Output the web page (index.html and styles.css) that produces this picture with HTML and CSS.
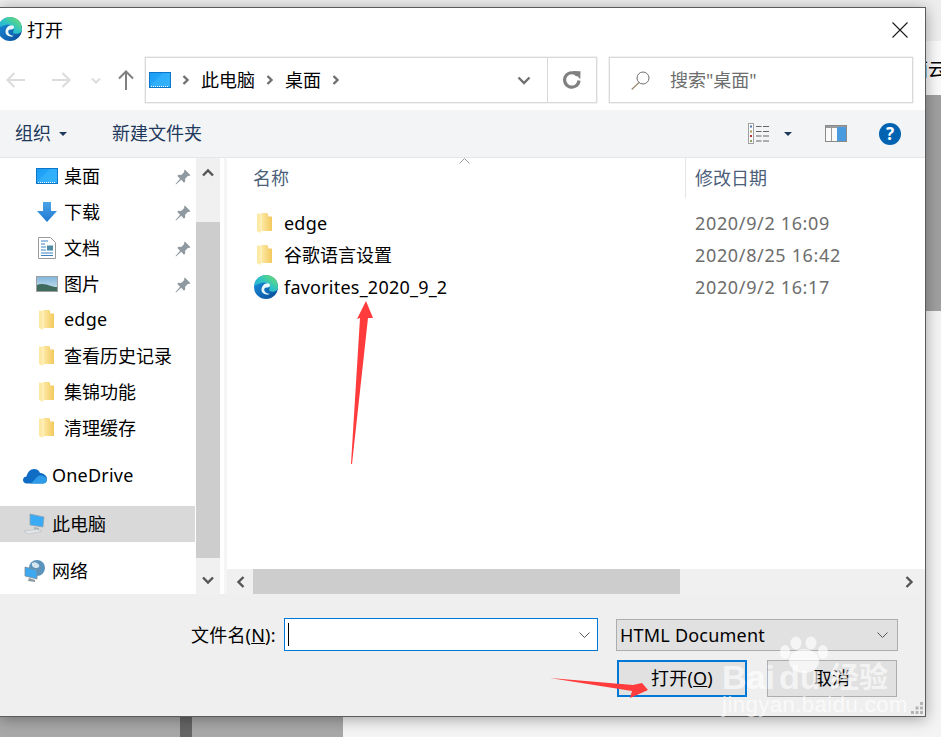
FILE: index.html
```html
<!DOCTYPE html>
<html lang="zh-CN">

<head>
    <meta charset="UTF-8">
    <title>打开</title>
    <link rel="stylesheet" href="styles.css">
</head>

<body>
    <svg class="defs" width="0" height="0">
        <defs>
            <linearGradient id="edgeBlue" x1="0" y1="0" x2="1" y2="1">
                <stop offset="0" stop-color="#1a94e4" />
                <stop offset="1" stop-color="#0b4a94" />
            </linearGradient>
            <linearGradient id="edgeGreen" x1="0" y1="1" x2="1" y2="0">
                <stop offset="0" stop-color="#1ba3e6" />
                <stop offset="0.5" stop-color="#2fc4c4" />
                <stop offset="1" stop-color="#78e05a" />
            </linearGradient>
            <linearGradient id="deskBlue" x1="0" y1="0" x2="1" y2="1">
                <stop offset="0" stop-color="#1a9cf5" />
                <stop offset="1" stop-color="#2fb0fb" />
            </linearGradient>
            <linearGradient id="arrowBlue" x1="0" y1="0" x2="0" y2="1">
                <stop offset="0" stop-color="#4aa3e8" />
                <stop offset="1" stop-color="#1f78d1" />
            </linearGradient>
            <linearGradient id="sky" x1="0" y1="0" x2="0" y2="1">
                <stop offset="0" stop-color="#7fb6dc" />
                <stop offset="1" stop-color="#d5e6ee" />
            </linearGradient>
            <linearGradient id="folderFace" x1="0" y1="0" x2="1" y2="0">
                <stop offset="0" stop-color="#fdeaa8" />
                <stop offset="1" stop-color="#f3c95c" />
            </linearGradient>
            <symbol id="edge" viewBox="0 0 24 24">
                <circle cx="12" cy="12" r="12" fill="url(#edgeBlue)" />
                <path d="M0.200 11C1 4.500 6.500 0 12 0c7 0 12 5 12 12 0 3-2.500 4.800-5.500 4.800-2.600 0-4-.9-3.400-2.200.8-1.600 1-3.500-.6-5C12.500 7.500 10 7 7.500 8 4.500 9 1.500 10 .2 11z" fill="url(#edgeGreen)" />
                <path d="M7.500 15c0-4 2.800-6.800 5.800-6.800 2.500 0 3.400 1.900 2.300 3.300-.6.800-1.500 1.100-2.400 1-2.100-.4-3.300.9-2.900 2.800.4 2 2.500 3.500 5.500 3.500-1 .7-2.300 1-3.500.8C9.600 19.200 7.500 17.300 7.500 15z" fill="#e9f8fb" />
                <path d="M11 14.800c.1-1.200 1.100-1.800 2.200-1.600-.7.500-1 1.500-.4 2.600.7 1.200 2.200 1.900 4 2-1.400.5-3.200.5-4.400-.3-1-.7-1.500-1.700-1.400-2.700z" fill="#1170bd" />
            </symbol>
            <symbol id="folder" viewBox="0 0 15 20">
                <path d="M4 0h6.500l1 3.500H15V18H4z" fill="url(#folderFace)" />
                <path d="M0 0.500l4 .5V20l-4-2z" fill="#fde9a4" />
                <path d="M4 1v19" stroke="#fff6d4" stroke-width="0.800" />
            </symbol>
            <symbol id="desktop" viewBox="0 0 22 16">
                <rect x="0.500" y="0.500" width="21" height="15" fill="url(#deskBlue)" stroke="#0e76c8" />
                <path d="M1 14L14 1h7v13z" fill="#3ab6fc" opacity="0.55" />
                <path d="M2 14.500h18" stroke="#ffffff" stroke-dasharray="1 1" />
            </symbol>
            <symbol id="pin" viewBox="0 0 16 16">
                <path d="M9.800 0.500l5.700 5.700-1.500.8-.9-.3-3 3.100.1 2.700-1.200 1.200-2.800-2.900L1 15.500l-.5-.5 4.600-5.200L2.300 7l1.200-1.200 2.700.1 3.100-3-.3-.9z" fill="#8f999f" />
            </symbol>
        </defs>
    </svg>

    <div class="behind-text">面云</div>

    <div class="dialog">
        <div class="titlebar">
            <svg class="title-icon"><use href="#edge" /></svg>
            <span class="title-text">打开</span>
            <svg class="close-icon" viewBox="0 0 16 16">
                <path d="M0.500 0.500l15 15M15.500 0.500l-15 15" stroke="#1a1a1a" stroke-width="1.100" fill="none" />
            </svg>
        </div>

        <div class="navbar">
            <svg class="nav-arrow" viewBox="0 0 19 16">
                <path d="M8.500 1L1.500 8l7 7M1.500 8H19" stroke="#dcdcdc" stroke-width="2.200" fill="none" />
            </svg>
            <svg class="nav-arrow forward" viewBox="0 0 19 16">
                <path d="M10.500 1l7 7-7 7M17.500 8H0" stroke="#dcdcdc" stroke-width="2.200" fill="none" />
            </svg>
            <svg class="nav-drop" viewBox="0 0 10 7">
                <path d="M1 1.500l4 4 4-4" stroke="#dcdcdc" stroke-width="2" fill="none" />
            </svg>
            <svg class="nav-up" viewBox="0 0 16 20">
                <path d="M1 8.500l7-7 7 7M8 1.500V20" stroke="#808080" stroke-width="2" fill="none" />
            </svg>
            <div class="address">
                <div class="crumbs">
                    <svg class="crumb-icon"><use href="#desktop" /></svg>
                    <svg class="crumb-sep" viewBox="0 0 8 10"><path d="M1.500 1l4 4-4 4" stroke="#707070" stroke-width="2.400" fill="none" /></svg>
                    <span>此电脑</span>
                    <svg class="crumb-sep" viewBox="0 0 8 10"><path d="M1.500 1l4 4-4 4" stroke="#707070" stroke-width="2.400" fill="none" /></svg>
                    <span>桌面</span>
                    <svg class="crumb-sep" viewBox="0 0 8 10"><path d="M1.500 1l4 4-4 4" stroke="#707070" stroke-width="2.400" fill="none" /></svg>
                    <svg class="crumb-drop" viewBox="0 0 14 9"><path d="M1.500 1.500L7 7l5.500-5.500" stroke="#707070" stroke-width="2.400" fill="none" /></svg>
                </div>
                <div class="refresh">
                    <svg width="18" height="18" viewBox="0 0 18 18">
                        <path d="M14.500 4.500A7.200 7.200 0 1 0 16 9.500" stroke="#808080" stroke-width="3.200" fill="none" />
                        <path d="M9.500 0l8 .2-.2 8z" fill="#808080" />
                    </svg>
                </div>
            </div>
            <div class="search">
                <svg class="search-icon" viewBox="0 0 19 19">
                    <circle cx="12" cy="7" r="6" stroke="#6d6d6d" fill="none" />
                    <path d="M8 11.500L0.700 18.500" stroke="#9a8a70" stroke-width="1.200" />
                </svg>
                <span>搜索"桌面"</span>
            </div>
        </div>

        <div class="commandbar">
            <span class="cmd">组织</span>
            <span class="caret"></span>
            <span class="cmd new-folder">新建文件夹</span>
            <svg class="view-icon" viewBox="0 0 21 21">
                <rect x="0.500" y="0.500" width="5" height="20" fill="#fafafa" stroke="#a0a0a0" />
                <rect x="2" y="2.500" width="2" height="2" fill="#4c7db0" />
                <rect x="2" y="7.500" width="2" height="2" fill="#a89a50" />
                <rect x="2" y="12" width="2" height="2" fill="#c03030" />
                <rect x="2" y="17" width="2" height="2" fill="#8da060" />
                <path d="M8 3.500h5.500M15 3.500h6M8 8.500h5.500M15 8.500h6M8 13h5.500M15 13h6M8 18h5.500M15 18h6" stroke="#666666" />
            </svg>
            <span class="caret view-caret"></span>
            <svg class="pane-icon" viewBox="0 0 22 17">
                <rect x="0.500" y="0.500" width="21" height="16" fill="#fafafa" stroke="#8a8a8a" />
                <rect x="1" y="1" width="20" height="2" fill="#9a9a9a" />
                <rect x="12" y="2" width="9" height="14" fill="#4a9ae0" />
                <path d="M6.500 3v13" stroke="#9a9a9a" />
            </svg>
            <span class="help">?</span>
        </div>

        <div class="main">
            <div class="sidebar">
                <div class="side-item">
                    <svg class="ico-desktop"><use href="#desktop" /></svg>
                    <span>桌面</span>
                    <svg class="pin"><use href="#pin" /></svg>
                </div>
                <div class="side-item">
                    <svg class="ico-down" viewBox="0 0 20 20">
                        <path d="M6 0h8v9h6L10 20 0 9h6z" fill="url(#arrowBlue)" />
                    </svg>
                    <span>下载</span>
                    <svg class="pin"><use href="#pin" /></svg>
                </div>
                <div class="side-item">
                    <svg class="ico-doc" viewBox="0 0 18 22">
                        <path d="M0.500 0.500h12l5 5v16H0.500z" fill="#ffffff" stroke="#9a9a9a" />
                        <path d="M3 4h7M3 7h4M3 10h5M3 13h5M3 16h12M3 18.500h12" stroke="#3f83c4" />
                        <rect x="9" y="8.500" width="6" height="5" fill="#4f8ca8" />
                    </svg>
                    <span>文档</span>
                    <svg class="pin"><use href="#pin" /></svg>
                </div>
                <div class="side-item">
                    <svg class="ico-desktop" viewBox="0 0 22 16">
                        <rect x="0.500" y="0.500" width="21" height="15" fill="url(#sky)" stroke="#a0a0a0" />
                        <path d="M1 9c4-2 9-1 14 1 3 1 5 1 6 1v4H1z" fill="#3f6a5e" />
                    </svg>
                    <span>图片</span>
                    <svg class="pin"><use href="#pin" /></svg>
                </div>
                <div class="side-item">
                    <svg class="ico-folder"><use href="#folder" /></svg>
                    <span class="latin">edge</span>
                </div>
                <div class="side-item">
                    <svg class="ico-folder"><use href="#folder" /></svg>
                    <span>查看历史记录</span>
                </div>
                <div class="side-item">
                    <svg class="ico-folder"><use href="#folder" /></svg>
                    <span>集锦功能</span>
                </div>
                <div class="side-item">
                    <svg class="ico-folder"><use href="#folder" /></svg>
                    <span>清理缓存</span>
                </div>

                <div class="side-item top-item group">
                    <svg class="ico-top" viewBox="0 0 24 16">
                        <path d="M4 15.500c-3 0-4-2-4-3.500 0-2.500 2-3.500 3.500-3.500C4.500 4 7.500 1 11 1c3 0 5 1.500 6 4 3 0 7 2.500 7 6 0 3-2 4.500-4 4.500z" fill="#0f6cc4" />
                        <path d="M8 15.500L15 8c2-1.500 8 0 9 3.500 0 2.500-2 4-4 4z" fill="#2e9be8" />
                    </svg>
                    <span class="latin">OneDrive</span>
                </div>
                <div class="side-item top-item group selected">
                    <svg class="ico-top tall" viewBox="0 0 24 22">
                        <path d="M7 1l14 3-1 10-13-2z" fill="#39aaf5" stroke="#8fa3b0" stroke-width="0.800" />
                        <path d="M11 14l5 1v2l-5-.8z" fill="#a8b4bc" />
                        <path d="M1 18l14-1.500 4 2-14 2.500z" fill="#e4e8ea" stroke="#b4bcc2" stroke-width="0.600" />
                    </svg>
                    <span>此电脑</span>
                </div>
                <div class="side-item top-item net">
                    <svg class="ico-top tall" viewBox="0 0 24 22">
                        <circle cx="14" cy="8" r="8" fill="#5b93bd" />
                        <path d="M9 3c3-2 6 0 7 2s-1 3-3 3-5-2-4-5z" fill="#d5e6ef" />
                        <path d="M2 7l12 3v9L2 16z" fill="#3ea8ee" stroke="#7d8c96" stroke-width="0.800" />
                        <path d="M6 18l6 2v2l-7-1z" fill="#8c98a0" />
                    </svg>
                    <span>网络</span>
                </div>
            </div>

            <div class="vscroll">
                <div class="vscroll-btn up">
                    <svg width="12" height="9" viewBox="0 0 12 9"><path d="M1 7.500l5-5 5 5" stroke="#555555" stroke-width="2.400" fill="none" /></svg>
                </div>
                <div class="vscroll-thumb"></div>
                <div class="vscroll-btn down">
                    <svg width="12" height="9" viewBox="0 0 12 9"><path d="M1 1.500l5 5 5-5" stroke="#555555" stroke-width="2.400" fill="none" /></svg>
                </div>
            </div>
            <div class="split"></div>

            <div class="files">
                <div class="file-head">
                    <div class="col-name">名称</div>
                    <div class="col-date">修改日期</div>
                    <svg class="sort" viewBox="0 0 11 6"><path d="M0.500 5.500l5-5 5 5" stroke="#9a9a9a" fill="none" /></svg>
                </div>
                <div class="file-list">
                    <div class="file-row">
                        <div class="file-name"><svg class="ico-file"><use href="#folder" /></svg><span class="latin">edge</span></div>
                        <div class="file-date">2020/9/2 16:09</div>
                    </div>
                    <div class="file-row">
                        <div class="file-name"><svg class="ico-file"><use href="#folder" /></svg><span class="cjk">谷歌语言设置</span></div>
                        <div class="file-date">2020/8/25 16:42</div>
                    </div>
                    <div class="file-row">
                        <div class="file-name"><svg class="ico-edge"><use href="#edge" /></svg><span class="latin">favorites_2020_9_2</span></div>
                        <div class="file-date">2020/9/2 16:17</div>
                    </div>
                </div>
                <div class="hscroll">
                    <div class="hscroll-btn">
                        <svg width="9" height="12" viewBox="0 0 9 12"><path d="M7.500 1l-5 5 5 5" stroke="#555555" stroke-width="2.400" fill="none" /></svg>
                    </div>
                    <div class="hscroll-thumb"></div>
                    <div class="hscroll-btn right">
                        <svg width="9" height="12" viewBox="0 0 9 12"><path d="M1.500 1l5 5-5 5" stroke="#555555" stroke-width="2.400" fill="none" /></svg>
                    </div>
                </div>
            </div>
        </div>

        <div class="footer">
            <div class="footer-row">
                <label class="name-label">文件名(<u>N</u>):</label>
                <div class="name-input">
                    <span class="text-caret"></span>
                    <svg class="select-arrow" viewBox="0 0 11 6"><path d="M0.500 0.500l5 5 5-5" stroke="#555555" fill="none" /></svg>
                </div>
                <div class="type-select">
                    <span class="latin">HTML Document</span>
                    <svg class="select-arrow" viewBox="0 0 11 6"><path d="M0.500 0.500l5 5 5-5" stroke="#555555" fill="none" /></svg>
                </div>
            </div>
            <div class="footer-row buttons">
                <button class="btn primary">打开(<u>O</u>)</button>
                <button class="btn">取消</button>
            </div>
            <svg class="grip" viewBox="0 0 12 12">
                <path d="M9 0h3v3H9zM4.500 4.500h3v3h-3zM9 4.500h3v3H9zM0 9h3v3H0zM4.500 9h3v3h-3zM9 9h3v3H9z" fill="#b4b4b4" />
            </svg>
        </div>
    </div>

    <!-- annotations on top of the screenshot -->
    <svg class="overlay" viewBox="0 0 941 737">
        <g class="watermark">
            <ellipse cx="804" cy="661" rx="15" ry="12" />
            <ellipse cx="785" cy="652" rx="5" ry="7" />
            <ellipse cx="796" cy="643" rx="5.500" ry="6.500" />
            <ellipse cx="811" cy="643" rx="5.500" ry="6.500" />
            <ellipse cx="823" cy="652" rx="5" ry="7" />
            <text class="wm-logo" x="722" y="689">Bai</text>
            <text class="wm-logo" x="779" y="689">du</text>
            <text class="wm-cn" x="830" y="688">经验</text>
            <text class="wm-url" x="722" y="712">jingyan.baidu.com</text>
        </g>
        <polygon class="red" points="366,301 373,318 368,318 352,464 351,464 360,318 357,319" />
        <polygon class="red" points="550,678 633,685 642,683 648,690 630,698 632,691" />
    </svg>
</body>

</html>
```

FILE: styles.css
```css
* {
    box-sizing: border-box;
}

body {
    position: relative;
    margin: 0;
    width: 941px;
    height: 737px;
    overflow: hidden;
    font-family: "Noto Sans", "Noto Sans CJK SC", sans-serif;
    font-size: 18px;
    color: #000;
    background:
        linear-gradient(#666, #666) 180px 717px / 12px 20px no-repeat,
        linear-gradient(#a8a8a8, #a8a8a8) 0 717px / 343px 20px no-repeat,
        linear-gradient(to bottom, #eee 41px, #fafafa 41px, #fafafa 95px, #a0a0a0 95px, #a0a0a0 311px, #f4f4f4 311px);
}

svg {
    display: block;
    flex: none;
}

.defs {
    position: absolute;
}

.latin {
    letter-spacing: 0.22px;
}

.cjk {
    margin-top: -2px;
}

.behind-text {
    position: absolute;
    left: 910px;
    top: 55px;
    white-space: nowrap;
}

.dialog {
    position: absolute;
    left: 0;
    top: 7px;
    width: 926px;
    height: 710px;
    display: flex;
    flex-direction: column;
    background: white;
    border: 1px solid #5c5c5c;
    border-left: none;
    box-shadow: 0 2px 14px rgba(0, 0, 0, 0.35);
}

/* title */
.titlebar {
    height: 48px;
    display: flex;
    align-items: center;
    flex: none;
    padding-bottom: 6px;
}

.title-icon {
    width: 24px;
    height: 24px;
    margin-left: -2px;
}

.title-text {
    margin-left: 5px;
    margin-top: -1px;
}

.close-icon {
    width: 16px;
    height: 16px;
    margin-left: auto;
    margin-right: 17px;
    margin-top: 2px;
}

/* back / forward / address / search */
.navbar {
    height: 54px;
    flex: none;
    display: flex;
    align-items: center;
    padding: 1px 0 7px 6px;
}

.nav-arrow {
    width: 19px;
    height: 16px;
}

.nav-arrow.forward {
    margin-left: 27px;
}

.nav-drop {
    width: 10px;
    height: 7px;
    margin-left: 20px;
}

.nav-up {
    width: 16px;
    height: 20px;
    margin-left: 17px;
}

.address {
    width: 452px;
    height: 46px;
    margin-left: 11px;
    display: flex;
    border: 1px solid #d9d9d9;
    box-shadow: 0 0 0 0.5px #e4e4e4;
}

.crumbs {
    flex: 1;
    display: flex;
    align-items: center;
    padding-left: 3px;
    gap: 11px;
}

.crumbs span {
    margin-top: -2px;
}

.crumb-icon {
    width: 22px;
    height: 16px;
}

.crumb-sep {
    width: 8px;
    height: 10px;
}

.crumb-drop {
    width: 14px;
    height: 9px;
    margin-left: auto;
    margin-right: 16px;
}

.refresh {
    width: 49px;
    display: flex;
    align-items: center;
    justify-content: center;
    border-left: 1px solid #d9d9d9;
}

.search {
    width: 304px;
    height: 46px;
    margin-left: 12px;
    display: flex;
    align-items: center;
    padding-left: 21px;
    color: #6d6d6d;
    border: 1px solid #d9d9d9;
    box-shadow: 0 0 0 0.5px #e4e4e4;
}

.search-icon {
    width: 19px;
    height: 19px;
    margin-right: 20px;
}

.search span {
    margin-top: -2px;
}

/* organise bar */
.commandbar {
    height: 48px;
    flex: none;
    display: flex;
    align-items: center;
    padding: 0 24px 0 15px;
    background-color: #f3f4f6;
    border-bottom: 1px solid #e6e6e6;
    color: #1e395b;
}

.cmd {
    margin-top: -4px;
}

.caret {
    width: 0;
    height: 0;
    margin-left: 8px;
    border: 4px solid transparent;
    border-top: 4px solid #1e395b;
    border-bottom: none;
}

.new-folder {
    margin-left: 45px;
}

.view-icon {
    width: 21px;
    height: 21px;
    margin-left: auto;
}

.view-caret {
    margin-left: 15px;
}

.pane-icon {
    width: 22px;
    height: 17px;
    margin-left: 33px;
}

.help {
    width: 22px;
    height: 22px;
    margin-left: 32px;
    border-radius: 50%;
    background-color: #0063b1;
    color: white;
    font-weight: bold;
    font-size: 17px;
    line-height: 22px;
    text-align: center;
}

/* tree and file list */
.main {
    height: 436px;
    flex: none;
    display: flex;
}

.sidebar {
    width: 196px;
    flex: none;
    overflow: hidden;
}

.side-item {
    height: 36px;
    width: 195px;
    display: flex;
    align-items: center;
    padding-left: 36px;
    position: relative;
}

.side-item span {
    position: absolute;
    left: 64px;
    top: 4px;
}

.side-item span.latin {
    top: 5px;
}

.top-item span,
.side-item.top-item span.latin {
    left: 52px;
}

.group {
    margin-top: 12px;
}

.net {
    margin-top: 11px;
}

.selected {
    background-color: #d9d9d9;
}

.ico-desktop {
    width: 22px;
    height: 16px;
}

.ico-down {
    width: 20px;
    height: 20px;
    margin-left: 1px;
}

.ico-doc {
    width: 18px;
    height: 22px;
    margin-left: 2px;
}

.ico-folder {
    width: 15px;
    height: 20px;
    margin-left: 3px;
}

.ico-top {
    width: 24px;
    height: 16px;
    margin-left: -13px;
}

.ico-top.tall {
    height: 22px;
}

.pin {
    position: absolute;
    left: 175px;
    top: 11px;
    width: 16px;
    height: 16px;
}

.vscroll {
    width: 24px;
    flex: none;
    display: flex;
    flex-direction: column;
    background-color: #f0f0f0;
}

.vscroll-btn {
    display: flex;
    justify-content: center;
}

.vscroll-btn.up {
    height: 64px;
    padding-top: 10px;
}

.vscroll-btn.down {
    flex: 1;
    padding-top: 18px;
}

.vscroll-thumb {
    height: 336px;
    background-color: #cdcdcd;
}

.split {
    width: 7px;
    flex: none;
    border-right: 3px solid #f5f5f5;
}

.files {
    flex: 1;
    display: flex;
    flex-direction: column;
}

.file-head {
    height: 40px;
    flex: none;
    display: flex;
    align-items: center;
    position: relative;
    color: #4c607a;
}

.col-name {
    width: 459px;
    height: 100%;
    padding-left: 26px;
    line-height: 41px;
    border-right: 1px solid #e5e5e5;
}

.col-date {
    padding-left: 9px;
    margin-top: -2px;
}

.sort {
    position: absolute;
    left: 232px;
    top: 0;
    width: 11px;
    height: 6px;
}

.file-list {
    flex: 1;
    padding-top: 9px;
}

.file-row {
    height: 32px;
    display: grid;
    grid-template-columns: 458px 1fr;
    align-items: center;
}

.file-name {
    display: flex;
    align-items: center;
    padding-left: 30px;
}

.file-date {
    padding-left: 10px;
    color: #6d6d6d;
    letter-spacing: 0.65px;
}

.ico-file {
    width: 15px;
    height: 20px;
    margin-right: 12px;
}

.ico-edge {
    width: 24px;
    height: 24px;
    margin-left: -3px;
    margin-right: 6px;
}

.hscroll {
    height: 25px;
    flex: none;
    display: flex;
    background-color: #f0f0f0;
}

.hscroll-btn {
    width: 26px;
    display: flex;
    align-items: center;
    justify-content: center;
}

.hscroll-btn.right {
    margin-left: auto;
    width: 32px;
}

.hscroll-thumb {
    width: 427px;
    background-color: #cdcdcd;
}

/* bottom */
.footer {
    flex: 1;
    position: relative;
    padding-top: 24px;
    background-color: #efefef;
}

.footer-row {
    display: flex;
    align-items: center;
    padding-left: 191px;
}

.name-label {
    width: 93px;
    white-space: nowrap;
    letter-spacing: 0.2px;
    margin-top: -2px;
}

.name-input {
    width: 314px;
    height: 33px;
    display: flex;
    align-items: center;
    padding: 0 7px 0 3px;
    background: white;
    border: 1px solid #0078d7;
}

.text-caret {
    width: 1px;
    height: 23px;
    background-color: #000;
}

.select-arrow {
    width: 11px;
    height: 6px;
    margin-left: auto;
}

.type-select {
    width: 282px;
    height: 32px;
    margin-left: 18px;
    display: flex;
    align-items: center;
    padding: 0 9px 0 3px;
    background-color: #e1e1e1;
    border: 1px solid #adadad;
}

.buttons {
    justify-content: flex-end;
    gap: 20px;
    padding: 0 28px 0 0;
    margin-top: 9px;
}

.btn {
    width: 130px;
    height: 37px;
    padding: 0 0 3px;
    font: inherit;
    color: #000;
    letter-spacing: 0.2px;
    background-color: #e1e1e1;
    border: 1px solid #adadad;
    border-radius: 0;
}

.btn.primary {
    border: 2px solid #0078d7;
}

.grip {
    position: absolute;
    right: 2px;
    bottom: 2px;
    width: 12px;
    height: 12px;
}

/* arrows and watermark */
.overlay {
    position: absolute;
    left: 0;
    top: 0;
    width: 941px;
    height: 737px;
    pointer-events: none;
}

.red {
    fill: #ff3b3b;
}

.watermark {
    fill: rgba(255, 255, 255, 0.65);
}

.wm-logo {
    font-family: "Liberation Sans", sans-serif;
    font-weight: bold;
    font-size: 34px;
}

.wm-cn {
    font-family: "Noto Sans CJK SC", sans-serif;
    font-weight: bold;
    font-size: 29px;
}

.wm-url {
    font-family: "Liberation Sans", sans-serif;
    font-size: 22px;
    letter-spacing: 0.5px;
}
```
